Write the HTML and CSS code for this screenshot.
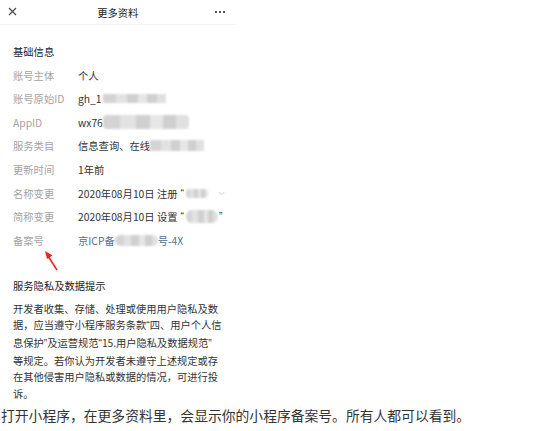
FILE: index.html
```html
<!DOCTYPE html>
<html lang="zh">
<head>
<meta charset="utf-8">
<link rel="stylesheet" href="styles.css">
</head>
<body>
<div class="phone">
  <div class="nav">
    <svg class="close" width="9" height="9" viewBox="0 0 9 9"><path d="M1 1L8 8M8 1L1 8" stroke="#444" stroke-width="1.1" fill="none"/></svg>
    <div class="title">更多资料</div>
    <div class="more"><i></i><i></i><i></i></div>
  </div>
  <div class="section">
    <div class="sec-title">基础信息</div>
    <div class="row"><span class="label">账号主体</span><span class="value">个人</span></div>
    <div class="row"><span class="label">账号原始ID</span><span class="value">gh_1<span class="blur b1"></span></span></div>
    <div class="row"><span class="label">AppID</span><span class="value">wx76<span class="blur b2"></span></span></div>
    <div class="row"><span class="label">服务类目</span><span class="value">信息查询、在线<span class="blur b3"></span></span></div>
    <div class="row"><span class="label">更新时间</span><span class="value">1年前</span></div>
    <div class="row"><span class="label">名称变更</span><span class="value">2020年08月10日 注册<span class="q qs">“</span><span class="blur b4"></span><svg class="chev" width="7" height="5" viewBox="0 0 7 5"><path d="M0.5 0.8L3.5 3.8L6.5 0.8" stroke="#c4c4c4" stroke-width="0.8" fill="none"/></svg></span></div>
    <div class="row"><span class="label">简称变更</span><span class="value">2020年08月10日 设置<span class="q qs">“</span><span class="blur b5"></span><span class="q">”</span></span></div>
    <div class="row"><span class="label">备案号</span><span class="value link">京ICP备<span class="blur b6"></span>号-4X</span></div>
  </div>
  <div class="section privacy">
    <div class="sec-title">服务隐私及数据提示</div>
    <p class="para">开发者收集、存储、处理或使用用户隐私及数<br>据，应当遵守小程序服务条款<span class="q">“</span>四、用户个人信<br>息保护<span class="q">”</span>及运营规范<span class="q">“</span>15.用户隐私及数据规范<span class="q">”</span><br>等规定。若你认为开发者未遵守上述规定或存<br>在其他侵害用户隐私或数据的情况，可进行投<br>诉。</p>
  </div>
  <svg class="arrow" width="20" height="24" viewBox="0 0 20 24"><path d="M14 21L5 7" stroke="#e52620" stroke-width="1.6" fill="none"/><path d="M2 2L9.5 6.5L4 10Z" fill="#e52620"/></svg>
</div>
<p class="caption">打开小程序，在更多资料里，会显示你的小程序备案号。所有人都可以看到。</p>
</body>
</html>
```
FILE: styles.css
```css
html, body {
  margin: 0;
  padding: 0;
  background: #fff;
}
body {
  font-family: "Noto Sans CJK SC", "Noto Sans", sans-serif;
  color: #333;
}
.phone {
  position: relative;
  width: 240px;
}
.nav {
  height: 24px;
  border-bottom: 1px solid #f4f4f4;
  display: flex;
  align-items: center;
  justify-content: space-between;
  padding: 0 12px 0 8px;
  margin-right: 3px;
}
.close {
  display: block;
  margin-top: -1px;
}
.title {
  font-size: 10.3px;
  color: #222;
  margin-left: 4px;
}
.more {
  display: flex;
  gap: 2.2px;
  margin-top: -1px;
}
.more i {
  width: 2px;
  height: 2px;
  background: #555;
  display: block;
}
.section {
  padding: 0 13px;
}
.sec-title {
  font-size: 10.3px;
  line-height: 23.5px;
  color: #222;
  margin-top: 15px;
}
.row {
  display: flex;
  align-items: center;
  height: 23.55px;
  font-size: 10.3px;
  white-space: nowrap;
}
.label {
  width: 65px;
  color: #a3a3a3;
  flex: none;
}
.value {
  color: #333;
  display: flex;
  align-items: center;
}
.link {
  color: #576b95;
}
.q {
  font-family: "Liberation Sans", sans-serif;
}
.qs {
  margin-left: 3px;
}
.blur {
  display: inline-block;
  height: 10px;
  border-radius: 4px;
  filter: blur(0.8px);
  background:
    linear-gradient(90deg, #d4d4d4 0 20%, #e2e2e2 20% 38%, #d0d0d0 38% 55%, #e6e6e6 55% 70%, #cfcfcf 70% 85%, #e0e0e0 85% 100%);
}
.b1 { width: 63px; height: 9px; border-radius: 0; margin-left: 1px; }
.b2 { width: 86px; height: 14px; margin-left: 0; }
.b3 { width: 54px; height: 11px; border-radius: 0; }
.b4 { width: 22px; height: 9px; margin-left: 2px; }
.b5 { width: 32px; height: 13px; border-radius: 6px; margin: 0 1px 0 2px; }
.b6 { width: 43px; height: 11px; border-radius: 6px; }
.chev {
  display: block;
  margin-left: 10px;
}
.privacy .sec-title {
  margin-top: 22.5px;
}
.para {
  margin: 3px 0 0;
  font-size: 10.25px;
  line-height: 16.6px;
  color: #333;
  white-space: nowrap;
}
.arrow {
  position: absolute;
  left: 43px;
  top: 249px;
}
.caption {
  margin: 3px 0 0 1px;
  font-size: 13.8px;
  line-height: 20px;
  color: #333;
  white-space: nowrap;
}
```
